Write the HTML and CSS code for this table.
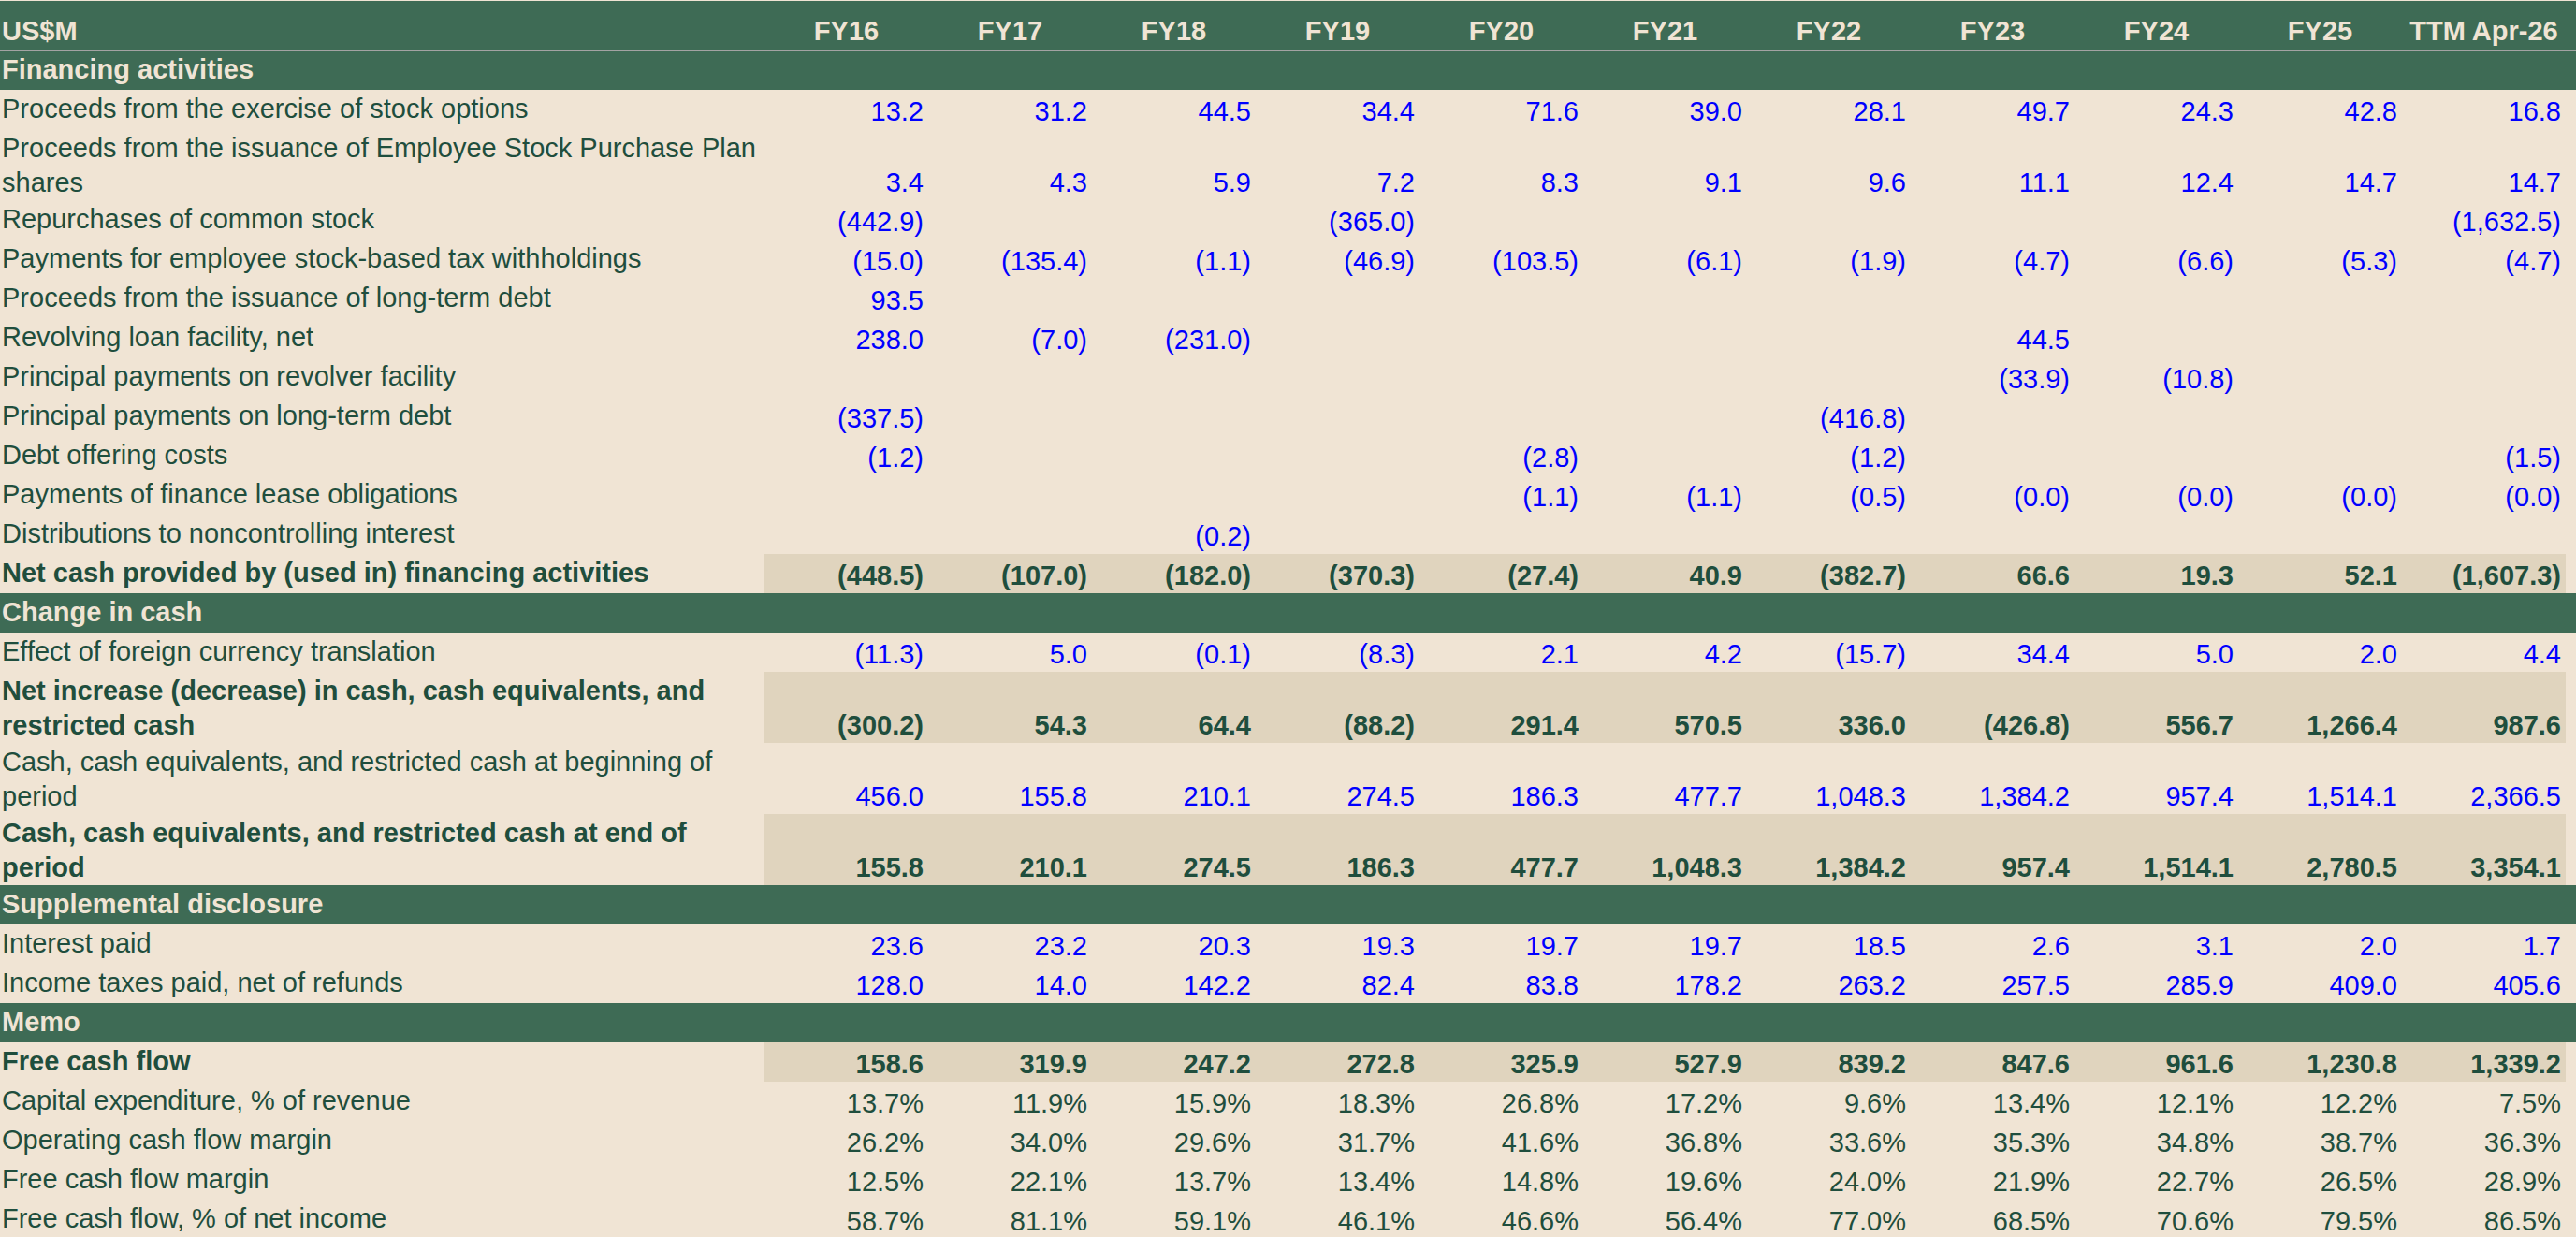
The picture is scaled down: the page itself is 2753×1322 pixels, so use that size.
FILE: index.html
```html
<!DOCTYPE html>
<html lang="en">
<head>
<meta charset="utf-8">
<title>Cash flow – financing</title>
<link rel="stylesheet" href="styles.css">
</head>
<body>
<div class="sheet">
  <div class="row head">
    <div class="label">US$M</div>
    <div class="num">FY16</div><div class="num">FY17</div><div class="num">FY18</div><div class="num">FY19</div><div class="num">FY20</div><div class="num">FY21</div><div class="num">FY22</div><div class="num">FY23</div><div class="num">FY24</div><div class="num">FY25</div><div class="num">TTM Apr-26</div>
  </div>

  <div class="row section"><div class="label">Financing activities</div></div>

  <div class="row">
    <div class="label">Proceeds from the exercise of stock options</div>
    <div class="num">13.2</div><div class="num">31.2</div><div class="num">44.5</div><div class="num">34.4</div><div class="num">71.6</div><div class="num">39.0</div><div class="num">28.1</div><div class="num">49.7</div><div class="num">24.3</div><div class="num">42.8</div><div class="num">16.8</div>
  </div>
  <div class="row tall">
    <div class="label">Proceeds from the issuance of Employee Stock Purchase Plan shares</div>
    <div class="num">3.4</div><div class="num">4.3</div><div class="num">5.9</div><div class="num">7.2</div><div class="num">8.3</div><div class="num">9.1</div><div class="num">9.6</div><div class="num">11.1</div><div class="num">12.4</div><div class="num">14.7</div><div class="num">14.7</div>
  </div>
  <div class="row">
    <div class="label">Repurchases of common stock</div>
    <div class="num">(442.9)</div><div class="num"></div><div class="num"></div><div class="num">(365.0)</div><div class="num"></div><div class="num"></div><div class="num"></div><div class="num"></div><div class="num"></div><div class="num"></div><div class="num">(1,632.5)</div>
  </div>
  <div class="row">
    <div class="label">Payments for employee stock-based tax withholdings</div>
    <div class="num">(15.0)</div><div class="num">(135.4)</div><div class="num">(1.1)</div><div class="num">(46.9)</div><div class="num">(103.5)</div><div class="num">(6.1)</div><div class="num">(1.9)</div><div class="num">(4.7)</div><div class="num">(6.6)</div><div class="num">(5.3)</div><div class="num">(4.7)</div>
  </div>
  <div class="row">
    <div class="label">Proceeds from the issuance of long-term debt</div>
    <div class="num">93.5</div><div class="num"></div><div class="num"></div><div class="num"></div><div class="num"></div><div class="num"></div><div class="num"></div><div class="num"></div><div class="num"></div><div class="num"></div><div class="num"></div>
  </div>
  <div class="row">
    <div class="label">Revolving loan facility, net</div>
    <div class="num">238.0</div><div class="num">(7.0)</div><div class="num">(231.0)</div><div class="num"></div><div class="num"></div><div class="num"></div><div class="num"></div><div class="num">44.5</div><div class="num"></div><div class="num"></div><div class="num"></div>
  </div>
  <div class="row">
    <div class="label">Principal payments on revolver facility</div>
    <div class="num"></div><div class="num"></div><div class="num"></div><div class="num"></div><div class="num"></div><div class="num"></div><div class="num"></div><div class="num">(33.9)</div><div class="num">(10.8)</div><div class="num"></div><div class="num"></div>
  </div>
  <div class="row">
    <div class="label">Principal payments on long-term debt</div>
    <div class="num">(337.5)</div><div class="num"></div><div class="num"></div><div class="num"></div><div class="num"></div><div class="num"></div><div class="num">(416.8)</div><div class="num"></div><div class="num"></div><div class="num"></div><div class="num"></div>
  </div>
  <div class="row">
    <div class="label">Debt offering costs</div>
    <div class="num">(1.2)</div><div class="num"></div><div class="num"></div><div class="num"></div><div class="num">(2.8)</div><div class="num"></div><div class="num">(1.2)</div><div class="num"></div><div class="num"></div><div class="num"></div><div class="num">(1.5)</div>
  </div>
  <div class="row">
    <div class="label">Payments of finance lease obligations</div>
    <div class="num"></div><div class="num"></div><div class="num"></div><div class="num"></div><div class="num">(1.1)</div><div class="num">(1.1)</div><div class="num">(0.5)</div><div class="num">(0.0)</div><div class="num">(0.0)</div><div class="num">(0.0)</div><div class="num">(0.0)</div>
  </div>
  <div class="row">
    <div class="label">Distributions to noncontrolling interest</div>
    <div class="num"></div><div class="num"></div><div class="num">(0.2)</div><div class="num"></div><div class="num"></div><div class="num"></div><div class="num"></div><div class="num"></div><div class="num"></div><div class="num"></div><div class="num"></div>
  </div>
  <div class="row total">
    <div class="label">Net cash provided by (used in) financing activities</div>
    <div class="num">(448.5)</div><div class="num">(107.0)</div><div class="num">(182.0)</div><div class="num">(370.3)</div><div class="num">(27.4)</div><div class="num">40.9</div><div class="num">(382.7)</div><div class="num">66.6</div><div class="num">19.3</div><div class="num">52.1</div><div class="num">(1,607.3)</div>
  </div>

  <div class="row section"><div class="label">Change in cash</div></div>

  <div class="row">
    <div class="label">Effect of foreign currency translation</div>
    <div class="num">(11.3)</div><div class="num">5.0</div><div class="num">(0.1)</div><div class="num">(8.3)</div><div class="num">2.1</div><div class="num">4.2</div><div class="num">(15.7)</div><div class="num">34.4</div><div class="num">5.0</div><div class="num">2.0</div><div class="num">4.4</div>
  </div>
  <div class="row tall total">
    <div class="label">Net increase (decrease) in cash, cash equivalents, and restricted cash</div>
    <div class="num">(300.2)</div><div class="num">54.3</div><div class="num">64.4</div><div class="num">(88.2)</div><div class="num">291.4</div><div class="num">570.5</div><div class="num">336.0</div><div class="num">(426.8)</div><div class="num">556.7</div><div class="num">1,266.4</div><div class="num">987.6</div>
  </div>
  <div class="row tall">
    <div class="label">Cash, cash equivalents, and restricted cash at beginning of period</div>
    <div class="num">456.0</div><div class="num">155.8</div><div class="num">210.1</div><div class="num">274.5</div><div class="num">186.3</div><div class="num">477.7</div><div class="num">1,048.3</div><div class="num">1,384.2</div><div class="num">957.4</div><div class="num">1,514.1</div><div class="num">2,366.5</div>
  </div>
  <div class="row tall total">
    <div class="label">Cash, cash equivalents, and restricted cash at end of period</div>
    <div class="num">155.8</div><div class="num">210.1</div><div class="num">274.5</div><div class="num">186.3</div><div class="num">477.7</div><div class="num">1,048.3</div><div class="num">1,384.2</div><div class="num">957.4</div><div class="num">1,514.1</div><div class="num">2,780.5</div><div class="num">3,354.1</div>
  </div>

  <div class="row section"><div class="label">Supplemental disclosure</div></div>

  <div class="row">
    <div class="label">Interest paid</div>
    <div class="num">23.6</div><div class="num">23.2</div><div class="num">20.3</div><div class="num">19.3</div><div class="num">19.7</div><div class="num">19.7</div><div class="num">18.5</div><div class="num">2.6</div><div class="num">3.1</div><div class="num">2.0</div><div class="num">1.7</div>
  </div>
  <div class="row">
    <div class="label">Income taxes paid, net of refunds</div>
    <div class="num">128.0</div><div class="num">14.0</div><div class="num">142.2</div><div class="num">82.4</div><div class="num">83.8</div><div class="num">178.2</div><div class="num">263.2</div><div class="num">257.5</div><div class="num">285.9</div><div class="num">409.0</div><div class="num">405.6</div>
  </div>

  <div class="row section"><div class="label">Memo</div></div>

  <div class="row total">
    <div class="label">Free cash flow</div>
    <div class="num">158.6</div><div class="num">319.9</div><div class="num">247.2</div><div class="num">272.8</div><div class="num">325.9</div><div class="num">527.9</div><div class="num">839.2</div><div class="num">847.6</div><div class="num">961.6</div><div class="num">1,230.8</div><div class="num">1,339.2</div>
  </div>
  <div class="row pct">
    <div class="label">Capital expenditure, % of revenue</div>
    <div class="num">13.7%</div><div class="num">11.9%</div><div class="num">15.9%</div><div class="num">18.3%</div><div class="num">26.8%</div><div class="num">17.2%</div><div class="num">9.6%</div><div class="num">13.4%</div><div class="num">12.1%</div><div class="num">12.2%</div><div class="num">7.5%</div>
  </div>
  <div class="row pct">
    <div class="label">Operating cash flow margin</div>
    <div class="num">26.2%</div><div class="num">34.0%</div><div class="num">29.6%</div><div class="num">31.7%</div><div class="num">41.6%</div><div class="num">36.8%</div><div class="num">33.6%</div><div class="num">35.3%</div><div class="num">34.8%</div><div class="num">38.7%</div><div class="num">36.3%</div>
  </div>
  <div class="row pct">
    <div class="label">Free cash flow margin</div>
    <div class="num">12.5%</div><div class="num">22.1%</div><div class="num">13.7%</div><div class="num">13.4%</div><div class="num">14.8%</div><div class="num">19.6%</div><div class="num">24.0%</div><div class="num">21.9%</div><div class="num">22.7%</div><div class="num">26.5%</div><div class="num">28.9%</div>
  </div>
  <div class="row pct">
    <div class="label">Free cash flow, % of net income</div>
    <div class="num">58.7%</div><div class="num">81.1%</div><div class="num">59.1%</div><div class="num">46.1%</div><div class="num">46.6%</div><div class="num">56.4%</div><div class="num">77.0%</div><div class="num">68.5%</div><div class="num">70.6%</div><div class="num">79.5%</div><div class="num">86.5%</div>
  </div>
</div>
</body>
</html>
```

FILE: styles.css
```css
html, body {
  margin: 0;
  padding: 0;
}

body {
  background: #f0e4d4;
  color: #1f4e3d;
  font-family: "Liberation Sans", Arial, sans-serif;
  font-size: 29px;
}

.sheet {
  border-top: 1px solid #f0e4d4;
}

.row {
  display: grid;
  grid-template-columns: 817px repeat(11, 175px);
  height: 42px;
  box-sizing: border-box;
}

.row.tall {
  height: 76px;
}

.label {
  box-sizing: border-box;
  border-right: 1px solid #a3a3a3;
  padding: 1.5px 2px 0 2px;
  line-height: 37px;
  overflow: hidden;
}

.num {
  box-sizing: border-box;
  display: flex;
  align-items: flex-end;
  justify-content: flex-end;
  padding-right: 5px;
  line-height: 37px;
  white-space: nowrap;
  color: #0000ff;
}

/* header */
.head {
  height: 53px;
  background: #3e6b55;
  border-bottom: 1px solid #a3a3a3;
  color: #f0e4d4;
  font-weight: bold;
}

.head .label {
  display: flex;
  align-items: flex-end;
  padding-top: 0;
  padding-bottom: 1px;
}

.head .num {
  color: #f0e4d4;
  justify-content: center;
  padding-right: 0;
  padding-bottom: 1px;
}

/* section bands */
.section {
  background: #3e6b55;
  color: #f0e4d4;
  font-weight: bold;
}

.section .label {
  border-right-color: #8fa398;
}

/* totals */
.total {
  font-weight: bold;
}

.total .num {
  background: #e0d4be;
  color: #1f4e3d;
}

/* ratio rows */
.pct .num {
  color: #1f4e3d;
}
```
